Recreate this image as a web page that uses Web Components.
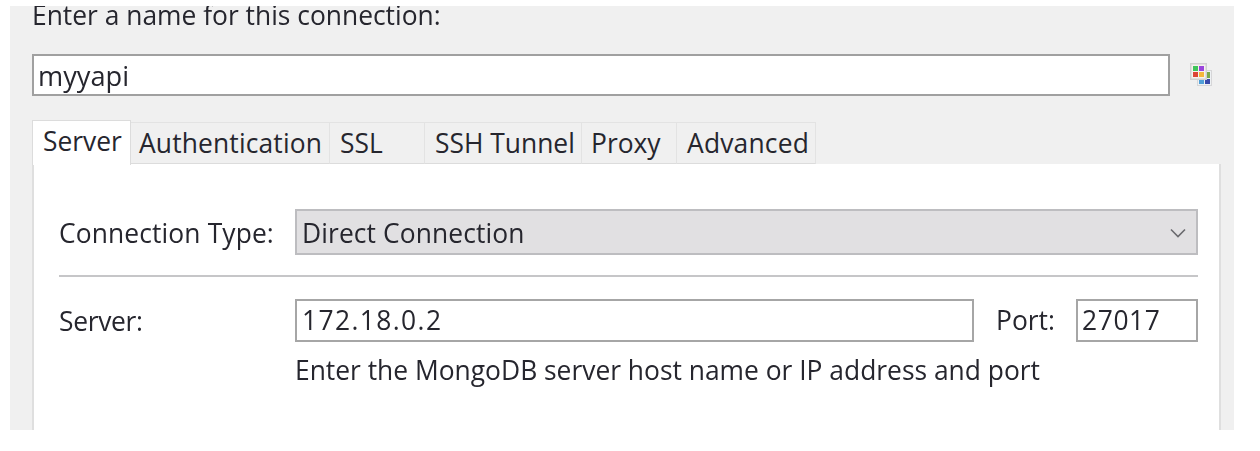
<!DOCTYPE html>
<html>
<head>
<meta charset="utf-8">
<title>Connection settings</title>
<style>
  html, body { margin: 0; padding: 0; background: #fff; }
  body { font-family: "Open Sans", "Noto Sans", sans-serif; color: #26262e; }
</style>
</head>
<body>
<conn-dialog>
  <name-row value="myyapi"></name-row>
  <tab-bar>
    <tab-item active>Server</tab-item>
    <tab-item style="--w:199px;--pad:8px;--ls:.15px">Authentication</tab-item>
    <tab-item style="--w:95px">SSL</tab-item>
    <tab-item style="--w:157px">SSH Tunnel</tab-item>
    <tab-item style="--w:95px;--pad:9px">Proxy</tab-item>
    <tab-item style="--w:139px;--ls:.2px">Advanced</tab-item>
  </tab-bar>
  <tab-panel>
    <form-row label="Connection Type:">
      <select-box>Direct Connection</select-box>
    </form-row>
    <hr-line></hr-line>
    <form-row label="Server:" style="--label-ls:-.3px">
      <text-box style="--ls:1.4px">172.18.0.2</text-box>
      <span-label>Port:</span-label>
      <text-box style="--w:122px;--ls:.6px;--pad:4px">27017</text-box>
    </form-row>
    <help-text>Enter the MongoDB server host name or IP address and port</help-text>
  </tab-panel>
</conn-dialog>

<script>
function define(name, css, html) {
  customElements.define(name, class extends HTMLElement {
    connectedCallback() {
      if (this.shadowRoot) return;
      this.attachShadow({ mode: 'open' });
      this.shadowRoot.innerHTML = '<style>' + css + '</style>' + (typeof html === 'function' ? html(this) : html);
    }
  });
}

// the whole reference is a soft, upscaled capture, hence the slight blur
define('conn-dialog', `
  :host { display: block; margin: 6px 26px 0 10px; height: 424px; background: #f0f0f0; overflow: hidden; }
  .wrap { filter: blur(0.45px); }
  .title { height: 36px; margin: -9px 0 0 22px; font-size: 26.4px; line-height: 36px; white-space: nowrap; }
  .body { padding-left: 22px; padding-right: 13px; }
`, `<div class="wrap"><div class="title">Enter a name for this connection:</div><div class="body"><slot></slot></div></div>`);

define('name-row', `
  :host { display: flex; align-items: center; height: 42px; margin: 21px 0 24px; }
  .box { box-sizing: border-box; width: 1138px; height: 42px; background: #fff; border: 2px solid #a0a0a0; padding-left: 4px; font-size: 27.2px; line-height: 40px; }
  svg { margin-left: 20px; flex: none; }
`, el => `<div class="box">${el.getAttribute('value')}</div>
  <svg width="24" height="24" viewBox="0 0 24 24">
    <rect x="7" y="7" width="15" height="16" fill="#d6d6d8"/>
    <rect x="8" y="8" width="13" height="14" fill="#eef1f3"/>
    <rect x="15" y="9" width="5" height="6" fill="#7aa94c"/>
    <rect x="15" y="16" width="5" height="5" fill="#3949ab"/>
    <rect x="9" y="16" width="5" height="5" fill="#4f9fd8"/>
    <rect x="0" y="0" width="17" height="17" fill="#d0d0d0"/>
    <rect x="1.5" y="1.5" width="14" height="14" fill="#f6f2ee"/>
    <rect x="3" y="3" width="5" height="5" fill="#3fc45a"/>
    <rect x="9" y="3" width="5" height="5" fill="#9a45dc"/>
    <rect x="3" y="9" width="5" height="5" fill="#dc4436"/>
    <rect x="9" y="9" width="5" height="5" fill="#f6b73c"/>
  </svg>`);

define('tab-bar', `
  :host { display: flex; align-items: flex-end; height: 44px; position: relative; z-index: 1; }
`, `<slot></slot>`);

define('tab-item', `
  :host { display: block; box-sizing: border-box; width: var(--w, 99px); height: 42px; background: #f0f0f0; border: 1px solid #e3e3e3; border-left: 0; border-bottom-color: #dcdcdc; font-size: 26.4px; line-height: 41px; padding-left: var(--pad, 10px); letter-spacing: var(--ls, 0); white-space: nowrap; }
  :host([active]) { height: 45px; margin-bottom: -1px; background: #fff; border: 1px solid #dcdcdc; border-bottom: 0; padding-left: 10px; line-height: 40px; }
`, `<slot></slot>`);

define('tab-panel', `
  :host { display: block; box-sizing: border-box; height: 266px; width: 1189px; background: #fff; border: 1px solid #dfdfdf; border-width: 0 2px 0 2px; padding: 45px 21px 0 25px; }
`, `<slot></slot>`);

define('form-row', `
  :host { display: flex; align-items: center; height: 46px; font-size: 26.4px; }
  .label { width: 236px; flex: none; white-space: nowrap; padding-top: 1px; letter-spacing: var(--label-ls, .12px); }
  .fields { flex: 1; display: flex; align-items: center; height: 100%; letter-spacing: 0; }
`, el => `<div class="label">${el.getAttribute('label')}</div><div class="fields"><slot></slot></div>`);

define('select-box', `
  :host { flex: 1; display: flex; align-items: center; justify-content: space-between; box-sizing: border-box; height: 46px; background: #e1e0e2; border: 2px solid #bdbdc0; padding: 1px 10px 0 5px; font-size: 26.4px; letter-spacing: .1px; }
`, `<span><slot></slot></span>
  <svg width="16" height="10" viewBox="0 0 16 10"><path d="M1 1.5 L8 8.5 L15 1.5" fill="none" stroke="#6a6a6e" stroke-width="1.6"/></svg>`);

define('hr-line', `
  :host { display: block; height: 2px; background: #c6c6c8; margin: 20px 0 20px; }
`, ``);

define('text-box', `
  :host { display: block; box-sizing: border-box; flex: none; width: var(--w, 679px); height: 43px; background: #fff; border: 2px solid #a6a6a6; padding-left: var(--pad, 5px); font-size: 26.4px; line-height: 38px; letter-spacing: var(--ls, 0); }
`, `<slot></slot>`);

define('span-label', `
  :host { display: block; flex: 1; margin-left: 22px; font-size: 26.4px; }
`, `<slot></slot>`);

define('help-text', `
  :host { display: block; margin: 9px 0 0 236px; font-size: 26.4px; line-height: 36px; white-space: nowrap; }
`, `<slot></slot>`);
</script>
</body>
</html>
